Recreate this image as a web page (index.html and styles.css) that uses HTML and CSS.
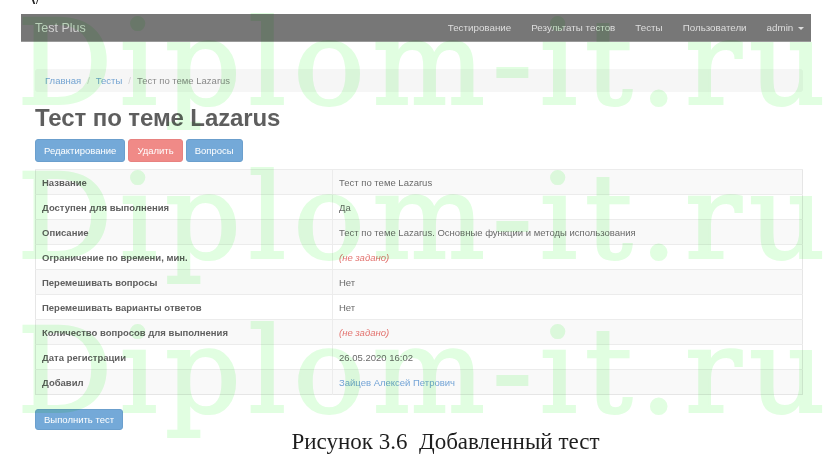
FILE: index.html
```html
<!DOCTYPE html>
<html lang="ru">
<head>
<meta charset="utf-8">
<title>Test Plus - Тест по теме Lazarus</title>
<link rel="stylesheet" href="styles.css">
</head>
<body>
<div class="sheet">
    <!--обрывок строки выше-->
    <div class="prevline">у</div>

    <!--скриншот страницы-->
    <div class="shot">
        <div class="navbar">
            <span class="brand">Test Plus</span>
            <ul class="nav">
                <li>Тестирование</li>
                <li>Результаты тестов</li>
                <li>Тесты</li>
                <li>Пользователи</li>
                <li>admin <span class="caret"></span></li>
            </ul>
        </div>

        <div class="container">
            <ol class="breadcrumb">
                <li><a href="#">Главная</a></li>
                <li><a href="#">Тесты</a></li>
                <li class="active">Тест по теме Lazarus</li>
            </ol>

            <h1>Тест по теме Lazarus</h1>

            <div class="actions">
                <a class="btn btn-primary" href="#">Редактирование</a>
                <a class="btn btn-danger" href="#">Удалить</a>
                <a class="btn btn-primary" href="#">Вопросы</a>
            </div>

            <table class="detail">
                <tr><th>Название</th><td>Тест по теме Lazarus</td></tr>
                <tr><th>Доступен для выполнения</th><td>Да</td></tr>
                <tr><th>Описание</th><td>Тест по теме Lazarus. Основные функции и методы использования</td></tr>
                <tr><th>Ограничение по времени, мин.</th><td><span class="not-set">(не задано)</span></td></tr>
                <tr><th>Перемешивать вопросы</th><td>Нет</td></tr>
                <tr><th>Перемешивать варианты ответов</th><td>Нет</td></tr>
                <tr><th>Количество вопросов для выполнения</th><td><span class="not-set">(не задано)</span></td></tr>
                <tr><th>Дата регистрации</th><td>26.05.2020 16:02</td></tr>
                <tr><th>Добавил</th><td><a href="#">Зайцев Алексей Петрович</a></td></tr>
            </table>

            <a class="btn btn-primary btn-run" href="#">Выполнить тест</a>
        </div>
    </div>

    <p class="caption">Рисунок 3.6&nbsp; Добавленный тест</p>

    <!--водяной знак-->
    <div class="watermark">
        <div>Diplom-it.ru</div>
        <div>Diplom-it.ru</div>
        <div>Diplom-it.ru</div>
    </div>
</div>
</body>
</html>
```

FILE: styles.css
```css
/*сброс*/
body,div,ul,ol,li,p,h1,table{margin:0; padding:0;}
li{list-style:none;}
a{text-decoration:none;}

body{background:#fff; font-family:"Liberation Sans", Arial, sans-serif;}
.sheet{width:839px; height:460px; position:relative; overflow:hidden;}

.prevline{height:4px; overflow:hidden; padding-left:30px; font:20px/0 "Liberation Serif", serif; color:#222;}

/*скриншот*/
.shot{padding:10px 0 0 21px;}

.navbar{width:790px; height:28px; background:#777; border-bottom:1px solid #9a9a9a; display:flex; align-items:center; justify-content:space-between; box-sizing:border-box; padding:0 7px 0 14px;}
.brand{color:#d2d2d2; font-size:12.5px;}
.nav{display:flex; gap:20px; font-size:9.8px; color:#dedede;}
.caret{display:inline-block; width:0; height:0; margin-left:2px; vertical-align:middle; border-top:3px solid #dedede; border-left:3px solid transparent; border-right:3px solid transparent;}

.container{width:768px; margin:27px 0 0 14px;}

.breadcrumb{display:flex; align-items:center; height:23px; padding:0 10px; background:#f6f6f6; border-radius:3px; font-size:9.5px;}
.breadcrumb a{color:#74a4d2;}
.breadcrumb li + li:before{content:"/"; color:#d0d0d0; padding:0 6px;}
.breadcrumb .active{color:#8a8a8a;}

h1{margin:13px 0 9px; font-size:24px; line-height:25px; font-weight:bold; color:#5e5e5e; letter-spacing:-0.1px;}

.actions{display:flex; gap:3px; margin-bottom:7px;}
.btn{display:inline-flex; align-items:center; height:23px; padding:0 8px; border-radius:3px; box-sizing:border-box; font-size:9.5px; color:#fff;}
.btn-primary{background:#74a9d8; border:1px solid #6b9fcd;}
.btn-danger{background:#f08a87; border:1px solid #e88280;}
.btn-run{height:21px;}

.detail{width:768px; border-collapse:collapse; border:1px solid #e6e6e6; margin-bottom:14px; font-size:9.5px;}
.detail th,.detail td{height:24px; padding:0 6px; border-top:1px solid #ececec; text-align:left; vertical-align:middle;}
.detail th{width:284px; font-weight:bold; color:#5f5f5f; border-right:1px solid #ececec;}
.detail td{color:#6a6a6a;}
.detail tr:nth-child(odd){background:#f9f9f9;}
.detail a{color:#74a4d6;}
.not-set{color:#e37470; font-style:italic;}

/*подпись*/
.caption{margin:0 0 0 52px; text-align:center; font:23px/24px "Liberation Serif", "Times New Roman", serif; color:#1e1e1e;}

/*водяной знак поверх всего*/
.watermark{position:absolute; left:17px; top:-14px; pointer-events:none; mix-blend-mode:multiply; color:#e1fee1; -webkit-text-stroke:2px #e1fee1; font-family:"DejaVu Serif", serif; font-size:118px; line-height:154px; letter-spacing:7px; white-space:nowrap; transform:scaleX(1.01); transform-origin:0 0;}
```
